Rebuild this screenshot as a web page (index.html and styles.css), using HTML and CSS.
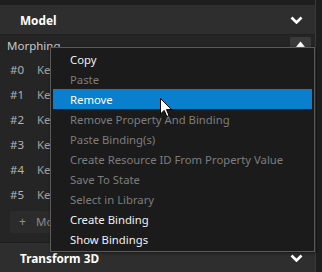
FILE: index.html
```html
<!DOCTYPE html>
<html>
<head>
<meta charset="utf-8">
<link rel="stylesheet" href="styles.css">
</head>
<body>
<div class="app">
  <div class="main">
    <div class="topgap"></div>
    <div class="section-header">
      <span class="section-title">Model</span>
      <svg class="chev" width="13" height="8" viewBox="0 0 13 8"><polyline points="1.5,1.5 6.5,6.5 11.5,1.5" fill="none" stroke="#ffffff" stroke-width="2.6"/></svg>
    </div>
    <div class="prop-row">
      <span class="prop-name">Morphing -</span>
      <div class="up-btn"><svg width="9" height="6" viewBox="0 0 9 6"><polygon points="0,6 4.5,0.5 9,6" fill="#ffffff"/></svg></div>
    </div>
    <div class="list">
      <div class="item"><span class="idx">#0</span><span class="val">Key</span></div>
      <div class="item"><span class="idx">#1</span><span class="val">Key</span></div>
      <div class="item"><span class="idx">#2</span><span class="val">Key</span></div>
      <div class="item"><span class="idx">#3</span><span class="val">Key</span></div>
      <div class="item"><span class="idx">#4</span><span class="val">Key</span></div>
      <div class="item"><span class="idx">#5</span><span class="val">Key</span></div>
    </div>
    <div class="add-btn"><span class="plus">+</span><span class="val">Morph</span></div>
    <div class="section-header bottom">
      <span class="section-title">Transform 3D</span>
      <svg class="chev" width="13" height="8" viewBox="0 0 13 8"><polyline points="1.5,1.5 6.5,6.5 11.5,1.5" fill="none" stroke="#ffffff" stroke-width="2.6"/></svg>
    </div>
  </div>
  <div class="scroll"></div>
</div>

<div class="menu">
  <div class="mi">Copy</div>
  <div class="mi dis">Paste</div>
  <div class="mi sel">Remove</div>
  <div class="mi dis">Remove Property And Binding</div>
  <div class="mi dis">Paste Binding(s)</div>
  <div class="mi dis">Create Resource ID From Property Value</div>
  <div class="mi dis">Save To State</div>
  <div class="mi dis">Select in Library</div>
  <div class="mi">Create Binding</div>
  <div class="mi">Show Bindings</div>
</div>

<svg class="cursor" width="13" height="20" viewBox="0 0 13 20"><path d="M0.5,0.5 L0.5,16 L4.2,12.4 L6.8,18.5 L9,17.6 L6.5,11.6 L11.5,11.6 Z" fill="#ffffff" stroke="#000000" stroke-width="1" stroke-linejoin="miter"/></svg>
</body>
</html>
```
FILE: styles.css
```css
html, body {
  margin: 0;
  padding: 0;
}
body {
  width: 322px;
  height: 272px;
  overflow: hidden;
  background: #252525;
  font-family: "Noto Sans", "Open Sans", sans-serif;
  font-size: 11px;
  position: relative;
}
.app {
  display: flex;
  height: 272px;
}
.main {
  width: 315px;
  display: flex;
  flex-direction: column;
  background: #252525;
}
.topgap {
  height: 5px;
  background: #1e1e1e;
}
.section-header {
  height: 30px;
  background: #2e2e2e;
  border-bottom: 1px solid #1f1f1f;
  display: flex;
  align-items: center;
  justify-content: space-between;
  padding: 1px 12px 0 20px;
  box-sizing: border-box;
  flex-shrink: 0;
}
.section-header.bottom {
  margin-top: 9px;
  border-top: 1px solid #1f1f1f;
  border-bottom: none;
  height: 30px;
}
.section-title {
  color: #ffffff;
  font-weight: bold;
  font-size: 11.8px;
}
.prop-row {
  height: 22px;
  display: flex;
  align-items: center;
  justify-content: space-between;
  padding: 0 4px 0 7px;
}
.prop-name {
  color: #c8c8c8;
  font-size: 11.5px;
}
.up-btn {
  width: 21px;
  height: 14px;
  background: #3a3a3a;
  border-radius: 2px;
  display: flex;
  justify-content: center;
  padding-top: 4px;
  box-sizing: border-box;
  align-self: flex-start;
  margin-top: 2px;
}
.up-btn svg { display: block; }
.list {
  display: flex;
  flex-direction: column;
  padding-top: 1px;
}
.item {
  height: 25px;
  display: flex;
  align-items: center;
  padding-left: 10px;
}
.idx {
  color: #b4b4b4;
  width: 27px;
  font-size: 11.5px;
}
.val {
  color: #a0a0a0;
  font-size: 11.5px;
}
.add-btn {
  margin: 4px 0 0 10px;
  height: 23px;
  width: 150px;
  background: #2b2b2b;
  display: flex;
  align-items: center;
  padding-left: 9px;
  box-sizing: border-box;
}
.plus {
  color: #909090;
  width: 17px;
  font-size: 12px;
}
.add-btn .val { color: #8a8a8a; }
.scroll {
  width: 7px;
  background: #1e1e1e;
  border-left: 1px solid #3a3a3a;
  box-sizing: border-box;
}
.menu {
  position: absolute;
  left: 50px;
  top: 47px;
  width: 265px;
  box-sizing: border-box;
  background: #1b1b1b;
  border: 1px solid #5a5a5a;
  padding: 1px 2px 2px;
  display: flex;
  flex-direction: column;
  box-shadow: 1px 1px 3px rgba(0,0,0,0.5);
}
.mi {
  height: 20px;
  line-height: 21px;
  padding-left: 17px;
  color: #f0f0f0;
  font-size: 11.3px;
  white-space: nowrap;
  overflow: hidden;
}
.mi.dis { color: #7d7d7d; }
.mi.sel {
  background: #0a7fcd;
  color: #ffffff;
}
.cursor {
  position: absolute;
  left: 160px;
  top: 98px;
}
```
